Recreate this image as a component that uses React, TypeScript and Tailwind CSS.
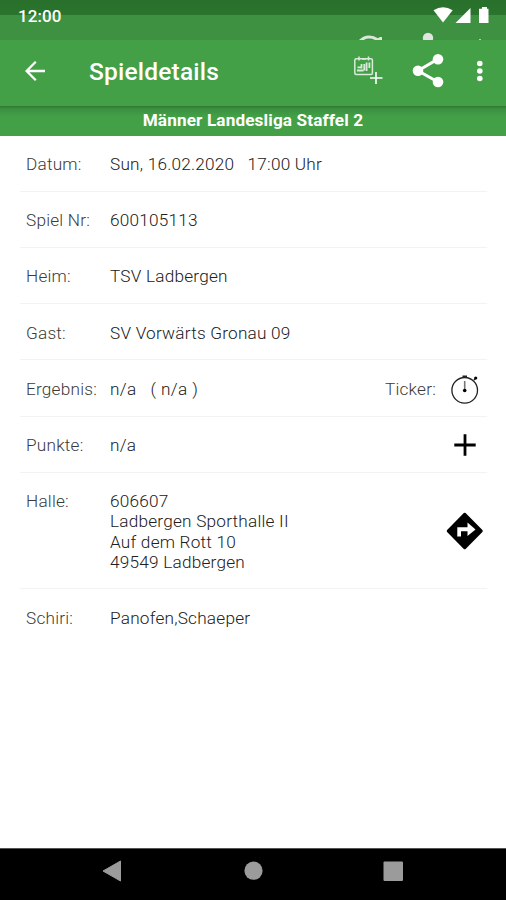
import type { ReactNode } from "react";

function StatusBar() {
  return (
    <div className="h-10 shrink-0 bg-linear-to-b from-[#28702b] from-0% via-[#2a742d] via-37% to-[#3d9140] to-37%">
      <div className="flex h-full justify-between overflow-hidden pl-[18px] text-white">
        <span className="pt-[7px] text-[17px] leading-[18px] font-medium tracking-[0.1px]">12:00</span>
        <svg className="h-10 w-[160px]" viewBox="346 0 160 40" fill="#fff">
          <path d="M433.5 10.2Q443 4.5 452.7 10.2L443 22.5Z" />
          <path d="M470.5 8V23H455.5Z" />
          <path d="M481 8.7H482V7H487V8.7H488.5V23H479V8.7Z" />
          <path d="M360 41Q368 33.5 378 40" fill="none" stroke="#dce8dc" strokeWidth="3" />
          <path d="M380 37H382V40H375Z" fill="#dce8dc" />
          <circle cx="428" cy="38" r="5.2" fill="#e3e3e3" />
          <rect x="479" y="39" width="2" height="1" fill="#b5d3b6" />
        </svg>
      </div>
    </div>
  );
}

function AppBar() {
  return (
    <header className="flex h-[66px] shrink-0 bg-[#43a047] text-white">
      <svg className="h-[66px] w-[89px]" viewBox="0 40 89 66" fill="none" stroke="#fff" strokeWidth="2.3">
        <path d="M45 71H27M35.8 61.8L26.6 71L35.8 80.2" />
      </svg>
      <h1 className="flex-1 pt-[18px] text-[24.5px] leading-7 font-medium tracking-[0.2px]">Spieldetails</h1>
      <svg className="h-[66px] w-[166px]" viewBox="340 40 166 66" fill="none" stroke="#fff">
        <g strokeWidth="1.5" stroke="#d8ecd9">
          <rect x="354.8" y="58.8" width="17.6" height="15.6" rx="1.5" />
          <path d="M359 56.5V60.5M368.5 56.5V60.5M362 59H366" />
          <path d="M357 70.5H363.5M357.5 67.3H361M361.5 68.5V64M364.3 70.5V64M366.6 62.5V71M369.4 62.5V68" strokeWidth="1.8" />
        </g>
        <path d="M376 72V84M370 78H382.5" strokeWidth="1.6" />
        <path d="M438 59L418 70.8L438 82" strokeWidth="3" />
        <g fill="#fff" stroke="none">
          <circle cx="438" cy="59.3" r="5.3" />
          <circle cx="418" cy="70.8" r="5.3" />
          <circle cx="438" cy="82" r="5.3" />
          <circle cx="479.8" cy="63.5" r="2.8" />
          <circle cx="479.8" cy="71" r="2.8" />
          <circle cx="479.8" cy="78.5" r="2.8" />
        </g>
      </svg>
    </header>
  );
}

function Row({ label, children, action, tall }: { label: string; children: ReactNode; action?: ReactNode; tall?: boolean }) {
  return (
    <div className={`flex border-b border-[#f3f3f3] pt-[18.4px] pl-[6px] ${tall ? "h-[116.6px]" : "h-[56.2px]"}`}>
      <div className="w-[84px] shrink-0 whitespace-nowrap text-[#3a3a3a]">{label}</div>
      <div className="flex-1 whitespace-pre text-[#202020]">{children}</div>
      {action}
    </div>
  );
}

function Stopwatch() {
  return (
    <svg className="-mt-[5px] mr-[7px] h-8 w-8" viewBox="448 373 32 32" fill="none" stroke="#222" strokeWidth="1.3">
      <circle cx="464.7" cy="389.3" r="12.8" />
      <path d="M464.7 389V380" stroke="#777" strokeWidth="1.6" />
      <circle cx="464.7" cy="389.5" r="1.8" fill="#000" stroke="none" />
      <path d="M462.5 375.3H467M464.7 375V377M474 379L475.5 377.5" strokeWidth="1.5" />
      <circle cx="475.7" cy="377" r="1.6" fill="#000" stroke="none" />
    </svg>
  );
}

function NavigationBar() {
  return (
    <nav className="h-[52px] shrink-0 border-t border-[#555] bg-black">
      <svg className="h-[51px] w-[506px]" viewBox="0 849 506 51" fill="#9b9b9b">
        <path d="M103 871L120.5 861V881Z" stroke="#9b9b9b" strokeLinejoin="round" />
        <circle cx="253.5" cy="870.7" r="9.1" />
        <rect x="383.5" y="861.5" width="19.5" height="19.5" rx="1" />
      </svg>
    </nav>
  );
}

export default function App() {
  return (
    <div className="flex h-[900px] w-[506px] flex-col overflow-hidden bg-white font-['Roboto',sans-serif]">
      <StatusBar />
      <AppBar />
      <div className="h-[29.5px] shrink-0 bg-linear-to-b from-[#2d7a30] from-0% via-[#3a8f3e] via-9% to-[#43a047] to-35% pt-1 text-center text-[17.2px] leading-5 font-bold tracking-[0.12px] text-white">
        Männer Landesliga Staffel 2
      </div>
      <main className="flex-1 pt-[0.2px] pr-[19px] pl-5 text-[17.2px] leading-[20.2px] font-light tracking-[0.22px]">
        <Row label="Datum:">{"Sun, 16.02.2020   17:00 Uhr"}</Row>
        <Row label="Spiel Nr:">600105113</Row>
        <Row label="Heim:">TSV Ladbergen</Row>
        <Row label="Gast:">SV Vorwärts Gronau 09</Row>
        <Row
          label="Ergebnis:"
          action={
            <div className="flex gap-3 text-[#3a3a3a]">
              <span>Ticker:</span>
              <Stopwatch />
            </div>
          }
        >
          <span className="tracking-[0.4px]">{"n/a   ( n/a )"}</span>
        </Row>
        <Row
          label="Punkte:"
          action={
            <svg className="-mt-[1.5px] mr-[11px] h-[22px] w-[22px]" viewBox="0 0 22 22" stroke="#000" strokeWidth="2.8">
              <path d="M11 0.3V21.7M0.3 11H21.7" />
            </svg>
          }
        >
          n/a
        </Row>
        <Row
          label="Halle:"
          tall
          action={
            <svg className="mt-[21px] mr-[3px] h-[38px] w-[38px]" viewBox="446 512 38 38">
              <path d="M464.7 514L481.5 531L464.7 548L448 531Z" stroke="#000" strokeWidth="2.5" strokeLinejoin="round" />
              <path d="M457.3 536.5V527.3H467.5V522.5L475.5 529.5L467.5 536V531.3H461V536.5Z" fill="#fff" />
            </svg>
          }
        >
          {"606607\nLadbergen Sporthalle II\nAuf dem Rott 10\n49549 Ladbergen"}
        </Row>
        <div className="flex pt-[18.4px] pl-[6px]">
          <div className="w-[84px] text-[#3a3a3a]">Schiri:</div>
          <div className="text-[#202020]">Panofen,Schaeper</div>
        </div>
      </main>
      <NavigationBar />
    </div>
  );
}
